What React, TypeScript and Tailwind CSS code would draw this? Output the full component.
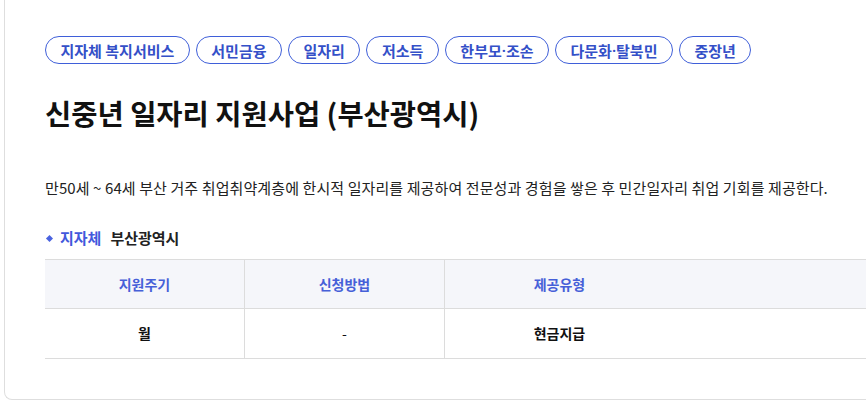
import React from 'react';

const tags = ['지자체 복지서비스', '서민금융', '일자리', '저소득', '한부모·조손', '다문화·탈북민', '중장년'];

const font = { fontFamily: '"Noto Sans CJK KR", "Noto Sans", sans-serif' };

// the CJK font draws the middle dot full width; the reference has a narrow one
const renderTag = (tag: string) =>
    tag.split('·').map((part, i) => (
        <React.Fragment key={i}>
            {i > 0 && <span className="font-['Noto_Sans']">·</span>}
            {part}
        </React.Fragment>
    ));

export default function App() {
    return (
        <div className="w-[866px] h-[414px] overflow-hidden bg-white" style={font}>
            <div className="ml-1 w-[900px] h-[400px] border-l border-b border-[#dedede] rounded-bl-lg pl-10 pt-9">
                <div className="flex gap-[6px]">
                    {tags.map(tag => (
                        <span
                            key={tag}
                            className="h-7 px-[14.5px] flex items-center rounded-full border border-[#3f5fd9] text-[#3450c8] text-[15px] font-semibold leading-none whitespace-pre"
                        >
                            {renderTag(tag)}
                        </span>
                    ))}
                </div>

                <h1 className="mt-[31px] text-[28.5px] leading-9 font-bold text-[#111]">
                    신중년 일자리 지원사업 (부산광역시)
                </h1>

                <p className="mt-[46px] text-[15px] leading-[22px] text-[#222] tracking-[0.1px]">
                    만50세 ~ 64세 부산 거주 취업취약계층에 한시적 일자리를 제공하여 전문성과 경험을 쌓은 후 민간일자리 취업 기회를 제공한다.
                </p>

                <div className="mt-7 flex items-center h-[22px] text-[15px]">
                    <span className="w-[5px] h-[5px] bg-[#4a63e0] rotate-45 ml-[2px] mr-[8px]" />
                    <span className="font-bold text-[#4258dc]">지자체</span>
                    <span className="ml-[9px] font-bold text-[#222]">부산광역시</span>
                </div>

                <div className="mt-[10px] w-[821px] border-t border-b border-[#dcdcdc] text-[14px]">
                    <div className="grid grid-cols-[199px_200px_230px_1fr] h-[49px] bg-[#f5f6fa] border-b border-[#dcdcdc] text-[#4660d8] font-semibold">
                        <div className="flex items-center justify-center">지원주기</div>
                        <div className="flex items-center justify-center border-l border-[#dcdcdc]">신청방법</div>
                        <div className="flex items-center justify-center border-l border-[#dcdcdc]">제공유형</div>
                        <div />
                    </div>
                    <div className="grid grid-cols-[199px_200px_230px_1fr] h-[49px] text-[#111]">
                        <div className="flex items-center justify-center font-bold">월</div>
                        <div className="flex items-center justify-center border-l border-[#dcdcdc]">-</div>
                        <div className="flex items-center justify-center border-l border-[#dcdcdc] font-semibold">현금지급</div>
                        <div />
                    </div>
                </div>
            </div>
        </div>
    );
}
